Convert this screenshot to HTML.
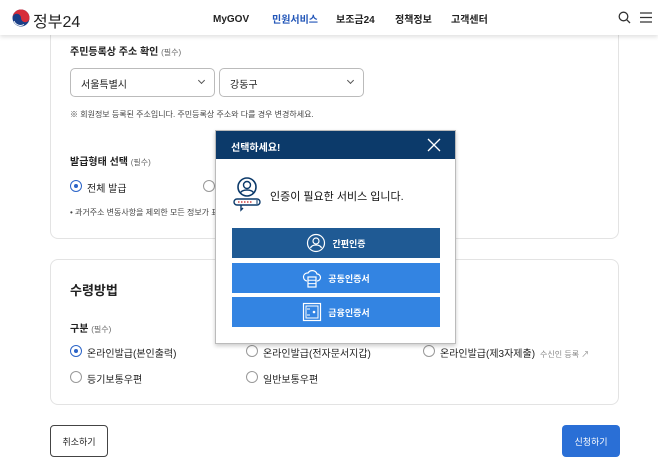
<!DOCTYPE html>
<html><head><meta charset="utf-8"><style>
*{margin:0;padding:0;box-sizing:border-box}
body{width:658px;height:462px;overflow:hidden;background:#fff;font-family:"Liberation Sans","Noto Sans CJK KR",sans-serif;color:#222;position:relative}
.a{position:absolute;white-space:nowrap}
.hdr{position:absolute;left:0;top:0;width:658px;height:35px;background:#fff;box-shadow:0 2px 4px rgba(0,0,0,.12);z-index:5}
.card{position:absolute;left:50px;width:569px;border:1px solid #e3e3e3;border-radius:8px;background:#fff}
.sel{position:absolute;top:68px;height:29px;border:1px solid #bbb;border-radius:5px;font-size:10px;padding:7px 0 0 10px}
.sel:after{content:"";position:absolute;right:10px;top:9px;width:4px;height:4px;border-right:1px solid #555;border-bottom:1px solid #555;transform:rotate(45deg)}
.r{position:absolute;width:12px;height:12px;border:1px solid #999;border-radius:50%;background:#fff}
.r.on{border-color:#2b64c8}
.r.on:after{content:"";position:absolute;left:3px;top:3px;width:4px;height:4px;border-radius:50%;background:#2b64c8}
.t10{font-size:10px}
.b{font-weight:bold}
.req{font-size:8px;color:#666;font-weight:normal}
.btn{position:absolute;left:16px;width:208px;height:30px;color:#fff;font-size:9px;font-weight:bold;display:flex;align-items:center;justify-content:center;gap:6px}
</style></head><body>
<div class="hdr">
 <svg class="a" style="left:12px;top:9px" width="18" height="18" viewBox="0 0 18 18"><circle cx="9" cy="9" r="8.5" fill="#1a3f87"/><path d="M0.5 9a8.5 8.5 0 0 1 17 0a4.25 4.25 0 0 1-8.5 0a4.25 4.25 0 0 0-8.5 0z" fill="#d62d3a"/><path d="M2 12a7 7 0 0 0 10 3.5" stroke="#fff" stroke-width="1" fill="none"/></svg>
 <div class="a" style="left:33px;top:8px;font-size:16px;color:#222">정부24</div>
 <div class="a b" style="left:213px;top:14px;font-size:10px">MyGOV</div>
 <div class="a b" style="left:272px;top:11px;font-size:10px;color:#2256b8">민원서비스</div>
 <div class="a b" style="left:336px;top:11px;font-size:10px">보조금24</div>
 <div class="a b" style="left:395px;top:11px;font-size:10px">정책정보</div>
 <div class="a b" style="left:451px;top:11px;font-size:10px">고객센터</div>
 <svg class="a" style="left:618px;top:11px" width="13" height="13" viewBox="0 0 13 13"><circle cx="5.5" cy="5.5" r="4.3" stroke="#333" stroke-width="1.3" fill="none"/><path d="M8.7 8.7L12 12" stroke="#333" stroke-width="1.3"/></svg>
 <svg class="a" style="left:640px;top:12px" width="12" height="11" viewBox="0 0 12 11"><path d="M0 1h12M0 5.5h12M0 10h12" stroke="#333" stroke-width="1.2"/></svg>
</div>
<div class="card" style="top:20px;height:219px"></div>
<div class="a b t10" style="left:70px;top:43px">주민등록상 주소 확인 <span class="req">(필수)</span></div>
<div class="sel" style="left:70px;width:145px">서울특별시</div>
<div class="sel" style="left:219px;width:145px">강동구</div>
<div class="a" style="left:70px;top:109px;font-size:8px;color:#444">※ 회원정보 등록된 주소입니다. 주민등록상 주소와 다를 경우 변경하세요.</div>
<div class="a b t10" style="left:70px;top:153px">발급형태 선택 <span class="req">(필수)</span></div>
<div class="r on" style="left:70px;top:180px"></div><div class="a t10" style="left:87px;top:180px">전체 발급</div>
<div class="r" style="left:203px;top:180px"></div>
<div class="a" style="left:70px;top:207px;font-size:8px;color:#444">• 과거주소 변동사항을 제외한 모든 정보가 표</div>
<div class="card" style="top:259px;height:146px"></div>
<div class="a b" style="left:70px;top:280px;font-size:13px">수령방법</div>
<div class="a b t10" style="left:70px;top:320px">구분 <span class="req">(필수)</span></div>
<div class="r on" style="left:70px;top:345px"></div><div class="a t10" style="left:87px;top:345px">온라인발급(본인출력)</div>
<div class="r" style="left:246px;top:345px"></div><div class="a t10" style="left:263px;top:345px">온라인발급(전자문서지갑)</div>
<div class="r" style="left:423px;top:345px"></div><div class="a t10" style="left:440px;top:345px">온라인발급(제3자제출) <span style="font-size:8px;color:#888">&nbsp;수신인 등록 ↗</span></div>
<div class="r" style="left:70px;top:371px"></div><div class="a t10" style="left:87px;top:371px">등기보통우편</div>
<div class="r" style="left:246px;top:371px"></div><div class="a t10" style="left:263px;top:371px">일반보통우편</div>
<div class="a" style="left:50px;top:425px;width:58px;height:32px;border:1px solid #444;border-radius:4px;font-size:9px;display:flex;align-items:center;justify-content:center">취소하기</div>
<div class="a" style="left:562px;top:425px;width:58px;height:32px;background:#2a6fd6;border-radius:4px;font-size:9px;color:#fff;display:flex;align-items:center;justify-content:center">신청하기</div>

<div class="a" style="left:215px;top:130px;width:241px;height:214px;background:#fff;border:1px solid #bbb;box-shadow:0 2px 4px rgba(0,0,0,.2);z-index:10">
 <div style="height:28px;background:#0c3a6a;color:#fff;font-size:10px;font-weight:bold;padding:8px 0 0 15px">선택하세요!</div>
 <svg class="a" style="left:211px;top:7px" width="14" height="14" viewBox="0 0 14 14"><path d="M1 1L13 13M13 1L1 13" stroke="#fff" stroke-width="1.3"/></svg>
 <svg class="a" style="left:16px;top:45px" width="32" height="38" viewBox="0 0 32 38"><circle cx="15" cy="11" r="9" fill="#fff" stroke="#0c3a6a" stroke-width="1.6"/><circle cx="15" cy="9" r="3.5" fill="none" stroke="#0c3a6a" stroke-width="1.4"/><path d="M8.5 17c1-4 12-4 13 0" fill="none" stroke="#0c3a6a" stroke-width="1.4"/><rect x="2" y="23" width="26" height="6" rx="3" fill="#fff" stroke="#0c3a6a" stroke-width="1.4"/><path d="M6 26h14" stroke="#c44" stroke-width="1.4" stroke-dasharray="1.5 1.5"/><path d="M9 29v5l2-2" stroke="#0c3a6a" stroke-width="1.4" fill="none"/><path d="M25 24v4" stroke="#0c3a6a"/></svg>
 <div class="a" style="left:54px;top:57px;font-size:11px;color:#111">인증이 필요한 서비스 입니다.</div>
 <div class="btn" style="top:97px;background:#1f5a94"><svg width="20" height="20" viewBox="0 0 20 20"><circle cx="10" cy="10" r="8.5" fill="none" stroke="#fff" stroke-width="1.2"/><circle cx="10" cy="8" r="3" fill="none" stroke="#fff" stroke-width="1.2"/><path d="M4.5 15c1.5-4 9.5-4 11 0" fill="none" stroke="#fff" stroke-width="1.2"/></svg>간편인증</div>
 <div class="btn" style="top:132px;background:#3384e2"><svg width="20" height="20" viewBox="0 0 20 20"><path d="M5 13a4 4 0 0 1 1-8a5 5 0 0 1 9 1a3.5 3.5 0 0 1 0 7" fill="none" stroke="#fff" stroke-width="1.2"/><rect x="6" y="9" width="8" height="10" fill="#3384e2" stroke="#fff" stroke-width="1.2"/><path d="M6 12.3h8M6 15.6h8" stroke="#fff"/></svg>공동인증서</div>
 <div class="btn" style="top:166px;background:#3384e2"><svg width="20" height="20" viewBox="0 0 20 20"><rect x="1.5" y="1.5" width="17" height="17" fill="none" stroke="#fff" stroke-width="1.2"/><rect x="4" y="4" width="12" height="12" fill="none" stroke="#fff"/><circle cx="12" cy="10" r="1.3" fill="#fff"/><path d="M5 7h3M5 13h3" stroke="#fff"/></svg>금융인증서</div>
</div>
</body></html>
